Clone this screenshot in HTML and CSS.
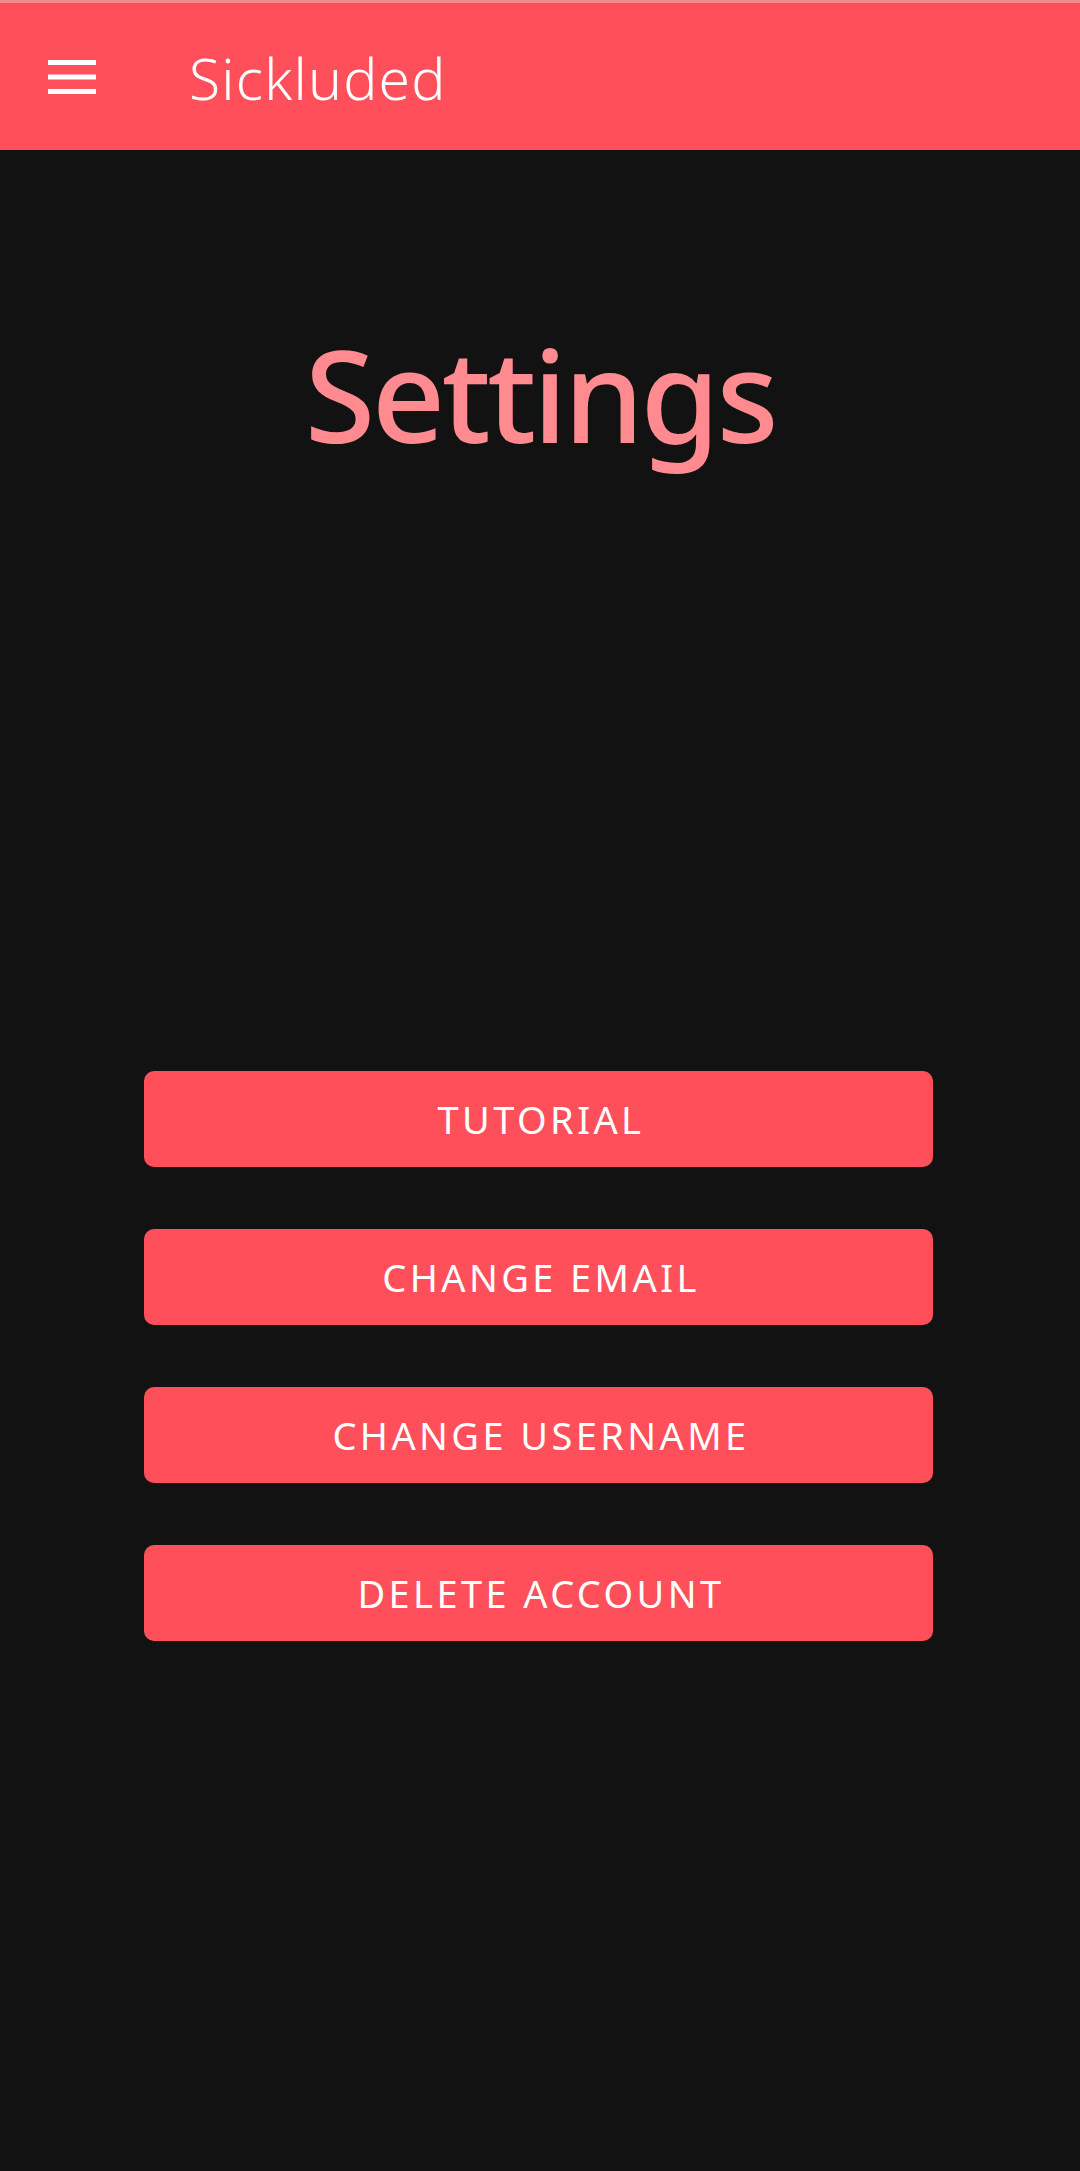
FILE: index.html
```html
<!DOCTYPE html>
<html>
<head>
<meta charset="utf-8">
<link rel="stylesheet" href="styles.css">
</head>
<body>
<header class="appbar">
  <button class="menu-btn" aria-label="Menu">
    <svg width="48" height="34" viewBox="0 0 48 34"><rect x="0" y="0" width="48" height="5" fill="#fff"/><rect x="0" y="14.5" width="48" height="5" fill="#fff"/><rect x="0" y="29" width="48" height="5" fill="#fff"/></svg>
  </button>
  <span class="app-title">Sickluded</span>
</header>
<main class="content">
  <h1 class="page-title">Settings</h1>
  <div class="actions">
    <button class="action">TUTORIAL</button>
    <button class="action">CHANGE EMAIL</button>
    <button class="action">CHANGE USERNAME</button>
    <button class="action">DELETE ACCOUNT</button>
  </div>
</main>
</body>
</html>
```
FILE: styles.css
```css
html, body {
  margin: 0;
  padding: 0;
  background: #121212;
  font-family: "Noto Sans", "Open Sans", sans-serif;
}
body {
  min-height: 2171px;
}
.appbar {
  box-sizing: border-box;
  height: 150px;
  border-top: 3px solid #f28a8c;
  background: #fe4f5a;
  display: flex;
  align-items: center;
}
.menu-btn {
  background: none;
  border: 0;
  padding: 0;
  margin-left: 48px;
  width: 48px;
  height: 34px;
  display: flex;
}
.app-title {
  margin-left: 93px;
  color: #ffffff;
  font-size: 57px;
  font-weight: 350;
  letter-spacing: 1.2px;
  line-height: 1;
  position: relative;
  top: 2px;
}
.content {
  display: flex;
  flex-direction: column;
  align-items: center;
}
.page-title {
  margin: 167px 0 0;
  font-size: 128px;
  line-height: 154px;
  font-weight: 500;
  color: #ff8a90;
  letter-spacing: -3.5px;
}
.actions {
  margin-top: 600px;
  margin-right: 4px;
  display: flex;
  flex-direction: column;
  gap: 62px;
  width: 789px;
}
.action {
  height: 96px;
  border: 0;
  border-radius: 10px;
  background: #fe4f5a;
  color: #ffffff;
  font-family: "Noto Sans", "Open Sans", sans-serif;
  font-size: 38px;
  letter-spacing: 3.4px;
  padding: 0 0 0 6px;
}
```
